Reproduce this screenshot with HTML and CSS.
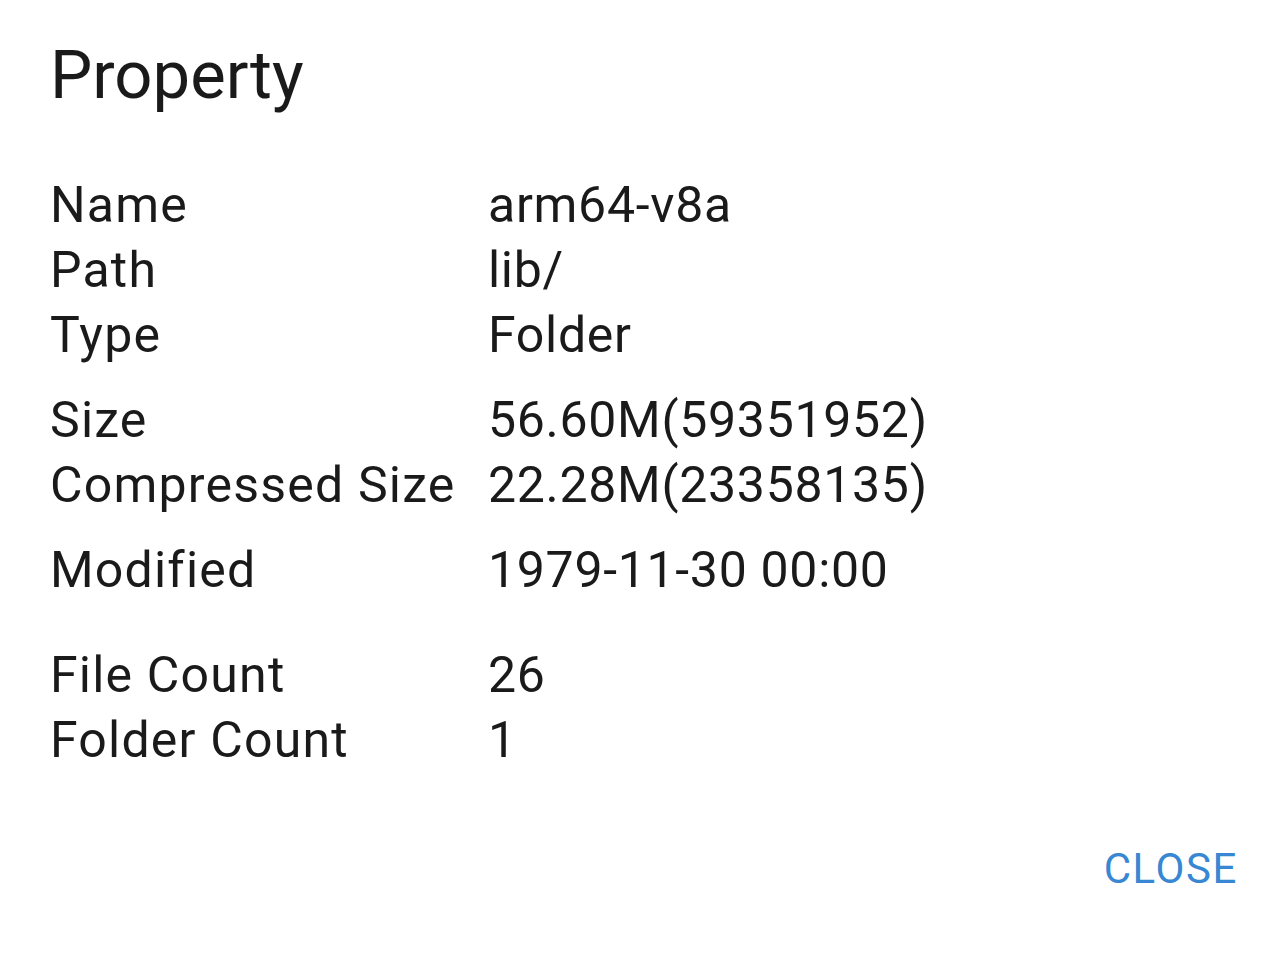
FILE: index.html
```html
<!DOCTYPE html>
<html>
<head>
<meta charset="utf-8"/>
<title>Property</title>
<link rel="stylesheet" href="styles.css">
</head>
<body>
<div class="dialog">
  <h1 class="title">Property</h1>

  <div class="group">
    <div class="row"><span class="label">Name</span><span class="value">arm64-v8a</span></div>
    <div class="row"><span class="label">Path</span><span class="value">lib/</span></div>
    <div class="row"><span class="label">Type</span><span class="value">Folder</span></div>
  </div>

  <div class="group">
    <div class="row"><span class="label">Size</span><span class="value">56.60M(59351952)</span></div>
    <div class="row"><span class="label">Compressed Size</span><span class="value">22.28M(23358135)</span></div>
  </div>

  <div class="group">
    <div class="row"><span class="label">Modified</span><span class="value">1979-11-30 00:00</span></div>
  </div>

  <div class="group group-wide">
    <div class="row"><span class="label">File Count</span><span class="value">26</span></div>
    <div class="row"><span class="label">Folder Count</span><span class="value">1</span></div>
  </div>

  <div class="actions">
    <span class="btn">CLOSE</span>
  </div>
</div>
</body>
</html>
```

FILE: styles.css
```css
body {
  margin: 0;
  background-color: white;
  font-family: Roboto, "Noto Sans", sans-serif;
  color: #1a1a1a;
}

.dialog {
  padding: 35px 42px 0 50px;
}

.title {
  margin: 0 0 58px 0;
  font-size: 67px;
  font-weight: 400;
  line-height: 80px;
}

.group {
  margin-bottom: 20px;
}

.group-wide {
  margin-top: 40px;
}

.row {
  display: grid;
  grid-template-columns: 438px 1fr;
  font-size: 50px;
  line-height: 65px;
  letter-spacing: 1.2px;
}

.value {
  letter-spacing: 0.7px;
}

.actions {
  display: flex;
  justify-content: flex-end;
  margin-top: 71px;
}

.btn {
  font-size: 42px;
  line-height: 50px;
  letter-spacing: 1.6px;
  color: #3787d2;
}
```
